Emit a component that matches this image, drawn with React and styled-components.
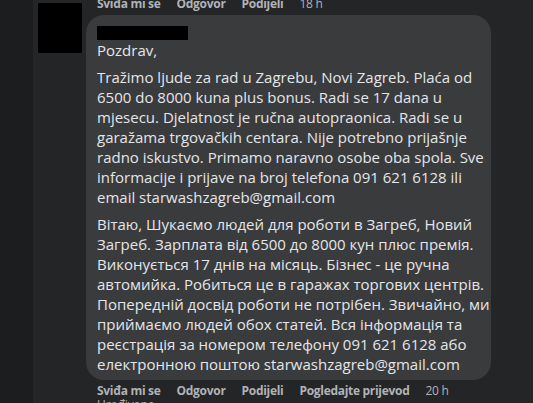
import React from 'react';
import styled, { createGlobalStyle } from 'styled-components';

const GlobalStyle = createGlobalStyle`
    html, body {
        margin: 0;
        padding: 0;
        height: 100%;
        overflow: hidden;
        background: #1c1d1f;
    }
    #root {
        height: 100%;
    }
`;

const firstParagraph = [
    'Tražimo ljude za rad u Zagrebu, Novi Zagreb. Plaća od',
    '6500 do 8000 kuna plus bonus. Radi se 17 dana u',
    'mjesecu. Djelatnost je ručna autopraonica. Radi se u',
    'garažama trgovačkih centara. Nije potrebno prijašnje',
    'radno iskustvo. Primamo naravno osobe oba spola. Sve',
    'informacije i prijave na broj telefona 091 621 6128 ili',
    'email starwashzagreb@gmail.com',
];

const secondParagraph = [
    'Вітаю, Шукаємо людей для роботи в Загреб, Новий',
    'Загреб. Зарплата від 6500 до 8000 кун плюс премія.',
    'Виконується 17 днів на місяць. Бізнес - це ручна',
    'автомийка. Робиться це в гаражах торгових центрів.',
    'Попередній досвід роботи не потрібен. Звичайно, ми',
    'приймаємо людей обох статей. Вся інформація та',
    'реєстрація за номером телефону 091 621 6128 або',
    'електронною поштою starwashzagreb@gmail.com',
];

const App = () => {
    return (
        <>
            <GlobalStyle />
            <Page>
                <Rail />
                <Thread>
                    <Comment>
                        <Avatar />
                        <Body>
                            <Actions $top>
                                <Action>Sviđa mi se</Action>
                                <Action>Odgovor</Action>
                                <Action>Podijeli</Action>
                                <Time>18 h</Time>
                            </Actions>
                            <Bubble>
                                <Author />
                                <Paragraph>Pozdrav,</Paragraph>
                                <Paragraph>
                                    {firstParagraph.map((line, i) => (
                                        <Line key={i}>{line}</Line>
                                    ))}
                                </Paragraph>
                                <Paragraph>
                                    {secondParagraph.map((line, i) => (
                                        <Line key={i}>{line}</Line>
                                    ))}
                                </Paragraph>
                            </Bubble>
                            <Actions>
                                <Action>Sviđa mi se</Action>
                                <Action>Odgovor</Action>
                                <Action>Podijeli</Action>
                                <Action>Pogledajte prijevod</Action>
                                <Time>20 h</Time>
                            </Actions>
                            <Edited>Uređivano</Edited>
                        </Body>
                    </Comment>
                </Thread>
            </Page>
        </>
    );
};

export default App;

const Page = styled.div`
    display: flex;
    height: 100%;
    font-family: "Open Sans", "Noto Sans", sans-serif;
`;

const Rail = styled.div`
    width: 33px;
    flex-shrink: 0;
    background: #1c1d1f;
`;

const Thread = styled.div`
    flex: 1;
    background: #242526;
    padding-left: 5px;
    overflow: hidden;
`;

const Comment = styled.div`
    display: flex;
    gap: 4px;
`;

const Avatar = styled.div`
    width: 44px;
    height: 50px;
    margin-top: 3px;
    background: #000;
    flex-shrink: 0;
`;

const Body = styled.div`
    display: flex;
    flex-direction: column;
    width: 405px;
`;

const Actions = styled.div`
    display: flex;
    gap: 16px;
    padding-left: 11px;
    height: 16px;
    line-height: 16px;
    margin-top: ${(p) => (p.$top ? '-4px' : '3px')};
    margin-bottom: ${(p) => (p.$top ? '3px' : '0')};
    font-size: 12px;
    letter-spacing: -0.3px;
    color: #b0b3b8;
    white-space: nowrap;
`;

const Action = styled.span`
    font-weight: 700;
`;

const Time = styled.span`
    font-weight: 400;
`;

const Bubble = styled.div`
    background: #3a3b3c;
    border-radius: 18px;
    padding: 11px 11px 6px;
    color: #e4e6eb;
    font-size: 15px;
    line-height: 20px;
`;

const Author = styled.div`
    width: 91px;
    height: 14px;
    background: #000;
`;

const Paragraph = styled.div`
    & + & {
        margin-top: 7px;
    }
`;

const Line = styled.span`
    display: block;
    white-space: nowrap;
`;

const Edited = styled.div`
    padding-left: 11px;
    font-size: 12px;
    line-height: 16px;
    margin-top: -2px;
    color: #b0b3b8;
`;
